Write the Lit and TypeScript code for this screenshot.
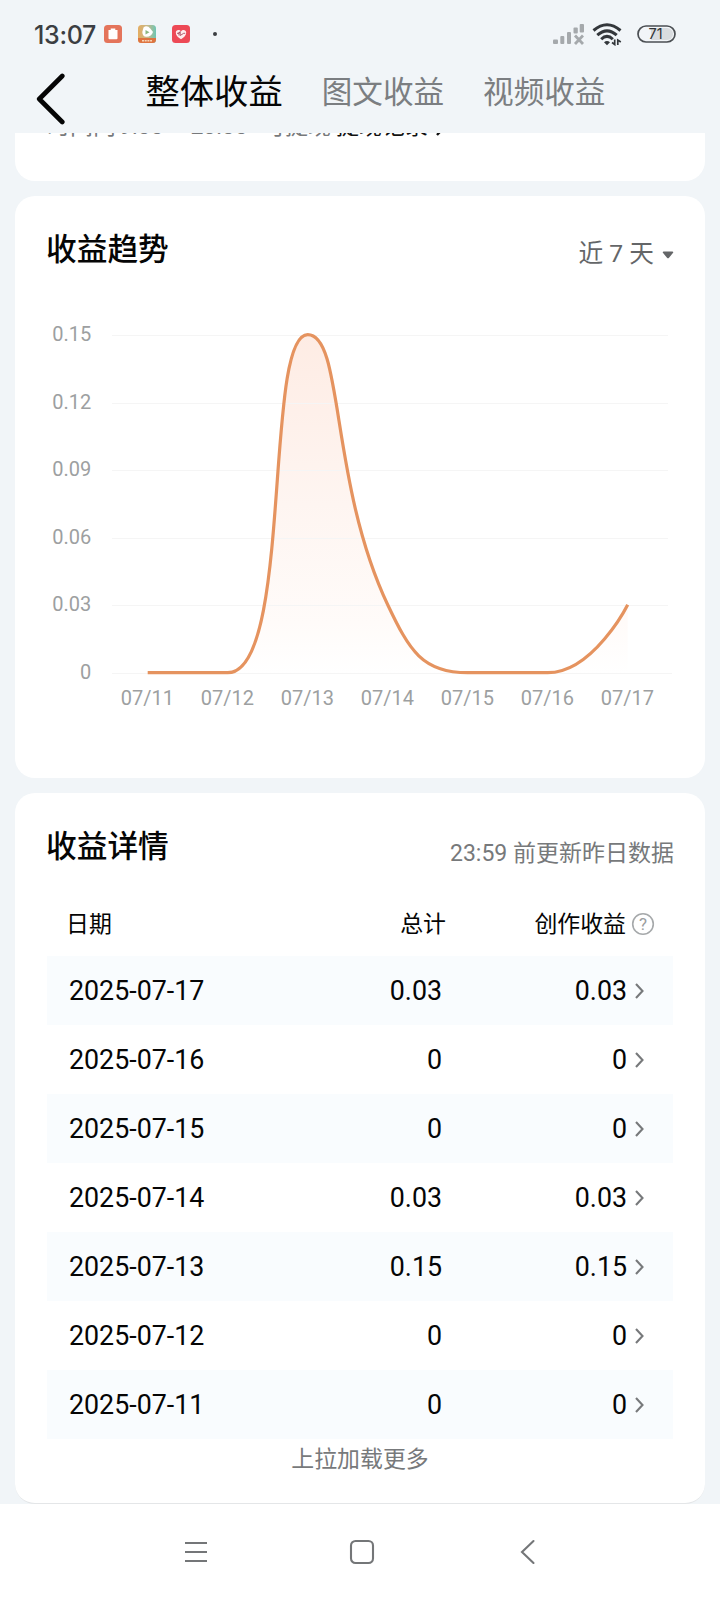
import { LitElement, html, svg, css } from "lit";
import { customElement } from "lit/decorators.js";

const sans = css`Roboto, "Noto Sans CJK SC", sans-serif`;

@customElement("status-bar")
class StatusBar extends LitElement {
  static styles = css`
    :host { display: flex; height: 68px; box-sizing: border-box; padding: 0 44px 0 34px; align-items: center; justify-content: space-between; }
    .left, .right { display: flex; align-items: center; }
    .time { font: 500 25px/30px Inter, sans-serif; color: #3b3e42; width: 70px; letter-spacing: -0.3px; white-space: nowrap; padding-top: 1px; }
    .apps { display: flex; gap: 16px; align-items: center; }
    .dot { width: 4px; height: 4px; border-radius: 50%; background: #3b3e42; margin-left: 23px; }
    .signal { margin-right: 8px; }
    .wifi { margin-right: 15px; }
    svg { display: block; }
    .battery-text { font: 400 14.5px Inter, sans-serif; fill: #303336; }
  `;
  render() {
    return html`
      <div class="left">
        <span class="time">13:07</span>
        <div class="apps">
          <svg width="18" height="18" viewBox="0 0 18 18">
            <rect width="18" height="18" rx="3.5" fill="#e4745b" />
            <path d="M4.500 5h2.200V3.600h4.600V5h2.200v8.200a1 1 0 0 1-1 1h-7a1 1 0 0 1-1-1z" fill="#fff" />
          </svg>
          <svg width="18" height="18" viewBox="0 0 18 18">
            <defs><linearGradient id="a" x1="0" y1="0" x2="1" y2="0"><stop offset="0" stop-color="#e4ad62" /><stop offset=".55" stop-color="#c5b98b" /><stop offset="1" stop-color="#6dc6b4" /></linearGradient></defs>
            <rect width="18" height="18" rx="3.5" fill="url(#a)" />
            <path d="M0 13h18v1.500a3.500 3.500 0 0 1-3.500 3.500h-11a3.500 3.500 0 0 1-3.500-3.500z" fill="#df7440" />
            <path d="M5.500 2.500Q9-.3 12.500 3.800L15 7q-1.500 4.500-6.500 4.800Q4.500 12 4.300 7z" fill="#fff" />
            <path d="M7.500 4.900v4.600l4-2.300z" fill="#8bb780" />
            <path d="M4 15.700h10" stroke="#f7d5b8" stroke-width="1.500" stroke-dasharray="2 .7" />
          </svg>
          <svg width="18" height="18" viewBox="0 0 18 18">
            <rect width="18" height="18" rx="3.5" fill="#ed4956" />
            <path d="M9 14.200C5.800 12 3.800 10.300 3.800 7.700 3.800 4.600 7.400 4 9 6.400c1.600-2.400 5.200-1.800 5.200 1.300 0 2.600-2 4.300-5.200 6.500z" fill="#fff" opacity=".9" />
            <path d="M5 8.300h2l1.200-1.800v4l3.500-2.200h1.500M7 7v3.500" stroke="#a94a5c" stroke-width=".9" fill="none" />
          </svg>
        </div>
        <i class="dot"></i>
      </div>
      <div class="right">
        <svg class="signal" width="31" height="22" viewBox="0 0 31 22">
          <g fill="#a5a9ac"><rect y="16.500" width="5" height="4.500" rx="1" /><rect x="7.300" y="13" width="4" height="8" rx="1" /><rect x="14" y="9" width="4" height="12" rx="1" /><rect x="20.500" y="4.500" width="4.300" height="6" rx="1" /><rect x="26.700" y="1" width="4.300" height="8.500" rx="1" /></g>
          <path d="M22 12.500l8 8.500M30 12.500l-8 8.500" stroke="#a5a9ac" stroke-width="2.800" />
        </svg>
        <svg class="wifi" width="30" height="24" viewBox="0 0 30 24">
          <g fill="none" stroke="#33373b" stroke-width="3"><path d="M1.500 8.500Q15-3 28.500 8.500" /><path d="M5.300 13.200Q15 4.500 24.700 13.200" /><path d="M9.200 17.300Q15 11.500 20.800 17.300" /></g>
          <path d="M12 20.300Q15 17.800 18 20.300L15 23.300z" fill="#33373b" />
          <path d="M20 20.500l2.700 2V17.500M28.800 20l-3-2V23" stroke="#33373b" stroke-width="1.700" fill="none" />
        </svg>
        <svg class="battery" width="39" height="18" viewBox="0 0 39 18">
          <rect x="1" y="1" width="37" height="16" rx="8" fill="#f2f5f8" stroke="#4b4f53" stroke-width="1.700" />
          <path d="M14 3h16a6 6 0 0 1 0 12h-16z" fill="#d9dcdf" />
          <text class="battery-text" x="18.500" y="14.300" text-anchor="middle">71</text>
        </svg>
      </div>`;
  }
}

@customElement("tab-header")
class TabHeader extends LitElement {
  static styles = css`
    :host { display: flex; height: 65px; align-items: flex-start; font-family: "Noto Sans CJK SC", sans-serif; }
    .back { display: block; margin: 4px 0 0 36px; width: 109.500px; flex: none; }
    .tab { white-space: nowrap; font-size: 30.600px; line-height: 45px; color: #7b7e81; margin-left: 39px; }
    .tab.active { font-size: 34.300px; line-height: 42px; color: #050505; margin-left: 0; }
  `;
  render() {
    return html`
      <svg class="back" width="109" height="54" viewBox="0 0 109 54"><path d="M26 4L3 27 26 50" fill="none" stroke="#050505" stroke-width="4.700" stroke-linecap="round" stroke-linejoin="round" /></svg>
      <span class="tab active">整体收益</span>
      <span class="tab">图文收益</span>
      <span class="tab">视频收益</span>`;
  }
}

@customElement("trend-chart")
class TrendChart extends LitElement {
  static styles = css`
    :host, svg { display: block; }
    text { font: 400 20px Roboto, sans-serif; fill: #9d9fa1; }
    .grid { stroke: #f5f5f5; stroke-width: 1; }
    .line { fill: none; stroke: #e5935f; stroke-width: 3.200; }
  `;
  render() {
    const values = ["0.15", "0.12", "0.09", "0.06", "0.03", "0"];
    const days = [11, 12, 13, 14, 15, 16, 17];
    const curve = "C292 373 263 35 307 35C343 35 329 182 387 305C408.600 350.600 421.600 373 467 373H547C592.400 373 627 305 627 305";
    return html`<svg width="690" height="420" viewBox="15 0 690 420">
      <defs><linearGradient id="fill" x1="0" y1="0" x2="0" y2="1">
        <stop offset="0" stop-color="#feece4" /><stop offset=".5" stop-color="#fef5f1" /><stop offset=".85" stop-color="#fffbf9" /><stop offset="1" stop-color="#fff" />
      </linearGradient></defs>
      <path d="M147 373H227${curve}V373z" fill="url(#fill)" transform="translate(.7 0)" />
      ${values.map((v, i) => {
        const y = Math.round(35 + i * 67.6) + 0.5;
        return svg`<line class="grid" x1="112" x2=${i === 5 ? 672 : 668} y1=${y} y2=${y} /><text x="91.200" y=${40.9 + i * 67.6} text-anchor="end">${v}</text>`;
      })}
      <path class="line" d="M147 373H227${curve}" transform="translate(.7 -0.3)" />
      ${days.map((d, i) => svg`<text x=${147.4 + i * 80} y="405" text-anchor="middle">07/${d}</text>`)}
    </svg>`;
  }
}

@customElement("income-table")
class IncomeTable extends LitElement {
  static styles = css`
    :host { display: block; margin: 0 32px; font-family: ${sans}; color: #050505; }
    .row { display: grid; grid-template-columns: 1fr 168px 185px 46px; height: 69px; box-sizing: border-box; padding-left: 22px; font-size: 26.800px; line-height: 71px; }
    .row:nth-child(even) { background: #f9fcfe; }
    .head { height: 59px; font-size: 22.900px; line-height: 55px; padding-left: 19px; grid-template-columns: 1fr 168px 180px 47px; }
    .num { text-align: right; }
    svg { display: block; }
    .chev { margin: 25px 0 0 7px; }
    .help { margin: 15px 0 0 5px; }
    .help text { font: 400 17px Roboto, sans-serif; fill: #9b9ea0; }
  `;
  rows = [["17", "0.03"], ["16", "0"], ["15", "0"], ["14", "0.03"], ["13", "0.15"], ["12", "0"], ["11", "0"]];
  render() {
    return html`
      <div class="row head">
        <span>日期</span><span class="num">总计</span><span class="num">创作收益</span>
        <svg class="help" width="24" height="24" viewBox="0 0 24 24"><circle cx="12" cy="12" r="10.300" fill="none" stroke="#a6a9ab" stroke-width="1.600" /><text x="12" y="18" text-anchor="middle">?</text></svg>
      </div>
      ${this.rows.map(([d, v]) => html`<div class="row">
        <span>2025-07-${d}</span><span class="num">${v}</span><span class="num">${v}</span>
        <svg class="chev" width="12" height="20" viewBox="0 0 12 20"><path d="M2 3l6.500 7L2 17" fill="none" stroke="#77797b" stroke-width="2.100" /></svg>
      </div>`)}`;
  }
}

@customElement("nav-bar")
class NavBar extends LitElement {
  static styles = css`
    :host { display: flex; height: 96px; box-sizing: border-box; padding-left: 3px; background: #fff; justify-content: center; align-items: center; gap: 141px; }
    svg { display: block; }
  `;
  render() {
    return html`
      <svg width="24" height="26" viewBox="0 0 24 26"><path d="M1 4h22M1 13h22M1 22h22" stroke="#747678" stroke-width="2" /></svg>
      <svg width="26" height="26" viewBox="0 0 26 26"><rect x="2" y="2" width="22" height="22" rx="4.500" fill="none" stroke="#747678" stroke-width="2.100" /></svg>
      <svg width="24" height="26" viewBox="0 0 24 26"><path d="M17.500 2L6 13 17.500 24" fill="none" stroke="#747678" stroke-width="2.100" stroke-linecap="round" /></svg>`;
  }
}

@customElement("app-root")
class AppRoot extends LitElement {
  static styles = css`
    :host { display: flex; flex-direction: column; width: 720px; height: 1600px; overflow: hidden; background: #f1f5f8; font-family: ${sans}; color: #050505; }
    .content { flex: 1; min-height: 0; display: flex; flex-direction: column; gap: 15px; padding: 0 15px; }
    .card { background: #fff; border-radius: 20px; box-sizing: border-box; flex: none; }
    .notice { height: 48px; border-radius: 0 0 20px 20px; overflow: hidden; display: flex; align-items: flex-start; }
    .notice p { margin: -21px 0 0 32px; font-size: 23px; line-height: 30px; color: #77797b; white-space: nowrap; display: flex; }
    .range { width: 143px; margin-left: 3px; }
    .link { color: #111; margin-left: 5px; display: flex; gap: 7px; }
    .link svg { display: block; margin-top: 5px; }
    .trend { height: 582px; }
    .detail { height: 711px; border-bottom: 1px solid #e4e6e8; }
    .title { display: flex; justify-content: space-between; padding: 0 31px; height: 104px; }
    h2 { margin: 0; font: 500 30.700px/102px "Noto Sans CJK SC", sans-serif; }
    .filter { display: flex; font-size: 24.700px; line-height: 115px; color: #646668; }
    .filter svg { display: block; margin: 55px 0 0 8px; }
    .update { font-size: 23px; line-height: 121px; color: #77797b; }
    .more { text-align: center; font-size: 22.900px; line-height: 41px; color: #77797b; }
  `;
  render() {
    return html`
      <status-bar></status-bar>
      <tab-header></tab-header>
      <main class="content">
        <section class="card notice"><p><span>时间内</span><span class="range">9:00 ~ 23:00</span><span>可提现</span><span class="link"><span>提现记录</span><svg width="12" height="20" viewBox="0 0 12 20"><path d="M2 3l7 7.500L2 18" fill="none" stroke="#111" stroke-width="2.400" /></svg></span></p></section>
        <section class="card trend">
          <div class="title"><h2>收益趋势</h2><span class="filter">近 7 天<svg width="12" height="8" viewBox="0 0 12 8"><path d="M1.500.5h9a.8.8 0 0 1 .6 1.300L7 6.700a1.300 1.300 0 0 1-2 0L.9 1.800A.8.8 0 0 1 1.500.5z" fill="#646668" /></svg></span></div>
          <trend-chart></trend-chart>
        </section>
        <section class="card detail">
          <div class="title"><h2>收益详情</h2><span class="update">23:59 前更新昨日数据</span></div>
          <income-table></income-table>
          <div class="more">上拉加载更多</div>
        </section>
      </main>
      <nav-bar></nav-bar>`;
  }
}
